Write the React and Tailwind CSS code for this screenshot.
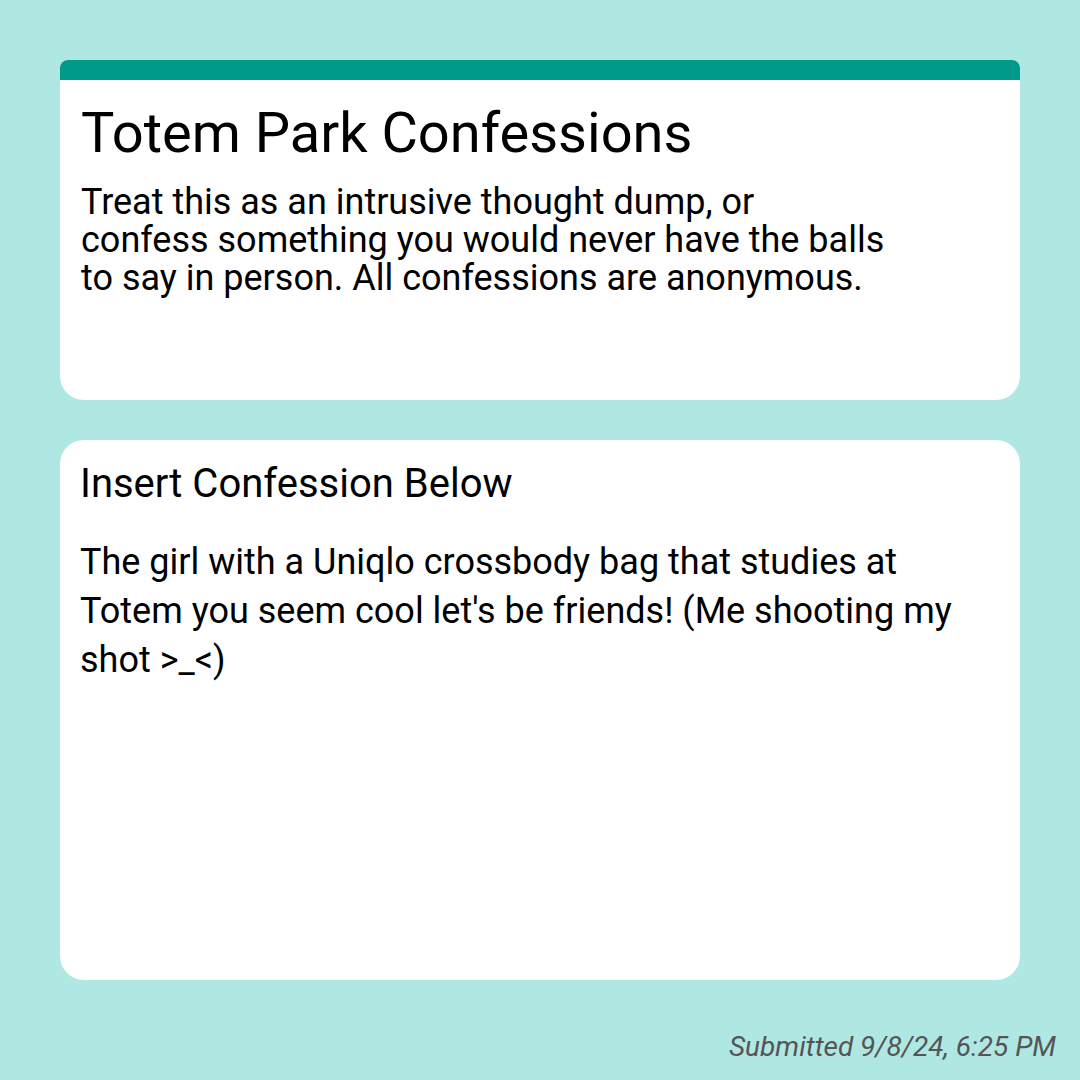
import React from "react";

const App = () => {
  return (
    <div
      className="w-[1080px] h-[1080px] bg-[#afe8e2] flex flex-col px-[60px] pt-[60px]"
      style={{ fontFamily: "Roboto, 'Noto Sans', sans-serif" }}
    >
      {/* Header card */}
      <div className="h-[340px] flex flex-col bg-white rounded-t-[8px] rounded-b-[24px] overflow-hidden">
        <div className="h-[20px] bg-[#009a8a]" />
        <div className="px-[21px] pt-[21px]">
          <h1 className="text-[56px] leading-[64px] text-black">Totem Park Confessions</h1>
          <p className="mt-[18px] text-[36px] leading-[38px] text-black">
            Treat this as an intrusive thought dump, or
            <br />
            confess something you would never have the balls
            <br />
            to say in person. All confessions are anonymous.
          </p>
        </div>
      </div>

      {/* Confession card */}
      <div className="mt-[40px] h-[540px] bg-white rounded-[24px] px-[20px] pt-[20px]">
        <h2 className="text-[40px] leading-[48px] text-black">Insert Confession Below</h2>
        <p className="mt-[30px] text-[36px] leading-[49px] text-black">
          The girl with a Uniqlo crossbody bag that studies at Totem you seem cool let's be friends! (Me shooting my shot &gt;_&lt;)
        </p>
      </div>

      <div className="flex justify-end mr-[-36px] mt-[46px]">
        <span className="text-[28px] italic text-[#555555]">Submitted 9/8/24, 6:25 PM</span>
      </div>
    </div>
  );
};

export default App;
